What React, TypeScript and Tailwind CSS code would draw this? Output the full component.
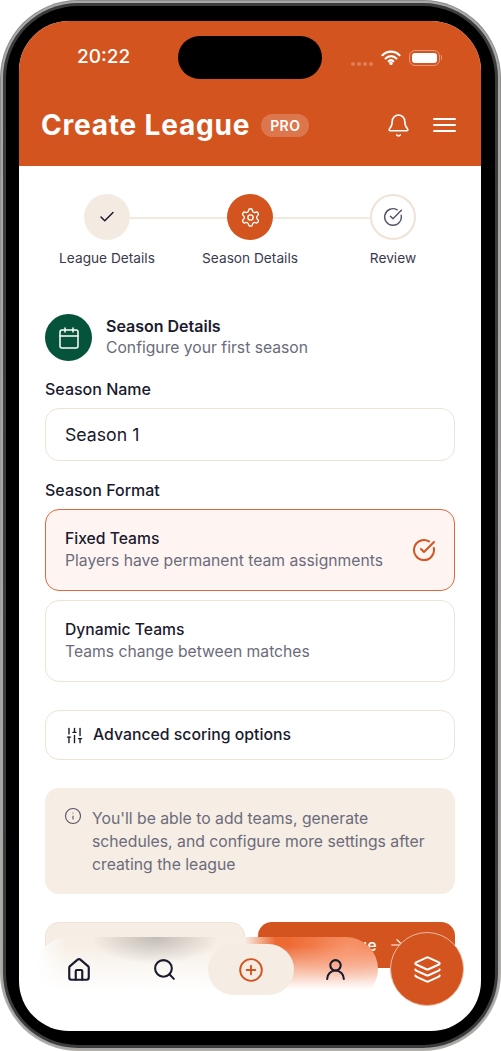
import {
  ArrowLeft,
  ArrowRight,
  Bell,
  Calendar,
  Check,
  CircleCheckBig,
  CirclePlus,
  House,
  Info,
  Layers,
  Search,
  Settings,
  SlidersVertical,
  UserRound,
} from "lucide-react";

function StatusBar() {
  return (
    <div className="grid grid-cols-[1fr_144px_1fr] pt-[15px] h-[58px]">
      <div className="pl-[58px] pt-[9px] text-[19px] leading-[24px] font-medium text-white">20:22</div>
      <div className="h-[43px] rounded-full bg-black" />
      <div className="flex items-start pl-[29px] pt-[14px]">
        <div className="flex gap-[2px] mt-[12px]">
          <span className="w-[4px] h-[4px] rounded-full bg-white/25" />
          <span className="w-[4px] h-[4px] rounded-full bg-white/25" />
          <span className="w-[4px] h-[4px] rounded-full bg-white/25" />
          <span className="w-[4px] h-[4px] rounded-full bg-white/25" />
        </div>
        <svg viewBox="0 0 20 15" className="w-[20px] h-[15px] ml-[8px] text-white" fill="none" stroke="currentColor" strokeWidth="2.2" strokeLinecap="round">
          <path d="M1.5 5.2a12 12 0 0 1 17 0" />
          <path d="M4.6 8.4a7.6 7.6 0 0 1 10.8 0" />
          <path d="M7.7 11.2a3.4 3.4 0 0 1 4.6 0" />
          <circle cx="10" cy="13.3" r="0.7" fill="currentColor" />
        </svg>
        <div className="ml-[8px] w-[31px] h-[16px] rounded-[6px] border border-white/40 p-[2px]">
          <div className="w-full h-full rounded-[3px] bg-white" />
        </div>
        <span className="ml-px mt-[5px] w-px h-[5px] rounded-r-full bg-white/40" />
      </div>
    </div>
  );
}

function Header() {
  return (
    <div className="h-[145px] bg-[#d45420] flex flex-col">
      <StatusBar />
      <div className="flex items-center pl-[22px] pr-[25px] mt-[29px]">
        <h1 className="text-[28px] leading-[34px] font-bold tracking-[0.8px] text-white">Create League</h1>
        <span className="ml-[11px] px-[9px] h-[23px] flex items-center rounded-full bg-white/20 text-[14px] font-semibold tracking-[0.4px] text-white">PRO</span>
        <Bell className="ml-auto w-[25px] h-[25px] text-white" strokeWidth={1.5} />
        <div className="ml-[22px] w-[23px] flex flex-col gap-[4px]">
          <span className="h-[2px] bg-white rounded-full" />
          <span className="h-[2px] bg-white rounded-full" />
          <span className="h-[2px] bg-white rounded-full" />
        </div>
      </div>
    </div>
  );
}

function Stepper() {
  return (
    <div className="relative flex justify-center pt-[28px]">
      <div className="absolute top-[51px] left-[111px] w-[240px] h-[2px] bg-[#f2e8dc]" />
      <div className="relative w-[143px] flex flex-col items-center">
        <div className="w-[46px] h-[46px] rounded-full bg-[#f3ebe1] flex items-center justify-center">
          <Check className="w-[18px] h-[18px] text-[#1a1a2e]" strokeWidth={2} />
        </div>
        <span className="mt-[9px] text-[13.7px] leading-[18px] text-[#3a3a4e]">League Details</span>
      </div>
      <div className="relative w-[143px] flex flex-col items-center">
        <div className="w-[46px] h-[46px] rounded-full bg-[#d45420] flex items-center justify-center">
          <Settings className="w-[21px] h-[21px] text-white" strokeWidth={1.5} />
        </div>
        <span className="mt-[9px] text-[13.7px] leading-[18px] text-[#3a3a4e]">Season Details</span>
      </div>
      <div className="relative w-[143px] flex flex-col items-center">
        <div className="w-[46px] h-[46px] rounded-full bg-white border-2 border-[#efe3d6] flex items-center justify-center">
          <CircleCheckBig className="w-[20px] h-[20px] text-[#55556a]" strokeWidth={1.75} />
        </div>
        <span className="mt-[9px] text-[13.7px] leading-[18px] text-[#3a3a4e]">Review</span>
      </div>
    </div>
  );
}

function OptionCard({ title, text, selected }: { title: string; text: string; selected?: boolean }) {
  return (
    <div
      className={
        selected
          ? "h-[82px] rounded-[14px] border border-[#e0683c] bg-[#fef5f3] pl-[19px] pr-[18px] flex items-center justify-between"
          : "h-[82px] rounded-[14px] border border-[#efe3d6] bg-white pl-[19px] pr-[18px] flex items-center justify-between"
      }
    >
      <div className="-mt-[1px]">
        <div className="text-[15.7px] leading-[22px] font-medium text-[#1a1a2e]">{title}</div>
        <div className="text-[15.7px] leading-[22px] text-[#6b6b7b]">{text}</div>
      </div>
      {selected && <CircleCheckBig className="w-[24px] h-[24px] text-[#d45420]" strokeWidth={2} />}
    </div>
  );
}

function BottomNav() {
  return (
    <>
      {/* frosted pill: the blurred buttons behind it are painted as gradients */}
      <div className="absolute left-[17px] top-[916px] w-[342px] h-[64px] rounded-[33px] bg-[radial-gradient(ellipse_64px_27px_at_119px_0px,rgba(120,118,114,0.42),rgba(120,118,114,0)),radial-gradient(ellipse_60px_36px_at_312px_10px,rgba(255,175,140,0.55),rgba(255,175,140,0)),linear-gradient(to_bottom,rgba(255,255,255,0)_0%,rgba(255,255,255,0)_14%,rgba(255,255,255,1)_82%),linear-gradient(to_right,#ffffff_0%,#f6efe6_9%,#f7efe6_61%,#ee6a34_70%,#ee6a34_82%,#f07a4c_100%)]">
        <House className="absolute left-[30px] top-[20px] w-[26px] h-[26px] text-[#1a1a2e]" strokeWidth={2} />
        <Search className="absolute left-[116px] top-[20px] w-[25px] h-[25px] text-[#1a1a2e]" strokeWidth={2} />
        <UserRound className="absolute left-[287px] top-[20px] w-[25px] h-[25px] text-[#1a1a2e]" strokeWidth={2} />
      </div>
      <div className="absolute left-[189px] top-[923px] w-[86px] h-[51px] rounded-full bg-[#f5ede4] flex items-center justify-center">
        <CirclePlus className="w-[26px] h-[26px] text-[#d45420]" strokeWidth={1.75} />
      </div>
      <div className="absolute left-[371px] top-[911px] w-[74px] h-[74px] rounded-full bg-[#d45420] border border-[#e9b9a2] flex items-center justify-center">
        <Layers className="w-[29px] h-[29px] text-white" strokeWidth={1.75} />
      </div>
    </>
  );
}

export default function App() {
  return (
    <div className="w-[501px] h-[1051px] bg-white font-['Inter',sans-serif]">
      <div className="w-full h-full rounded-[78px] p-px bg-gradient-to-b from-[#8a8a8a] to-[#b5b3a8]">
        <div className="w-full h-full rounded-[77px] p-[2px] bg-[#a8a8a8]">
          <div className="w-full h-full rounded-[75px] p-[3px] bg-[#3c3c3c]">
            <div className="w-full h-full rounded-[72px] pt-[15px] pb-[14px] pl-[13px] pr-[14px] bg-black">
              <div className="relative w-full h-full rounded-[50px] overflow-hidden bg-white">
                <Header />
                <Stepper />
                <div className="px-[26px]">
                  <div className="flex items-center mt-[47px]">
                    <div className="w-[47px] h-[47px] rounded-full bg-[#05533a] flex items-center justify-center">
                      <Calendar className="w-[24px] h-[24px] text-white" strokeWidth={1.5} />
                    </div>
                    <div className="ml-[14px] -mt-[2px]">
                      <div className="text-[16px] leading-[21px] font-semibold text-[#1a1a2e]">Season Details</div>
                      <div className="text-[15.7px] leading-[21px] text-[#6b6b7b]">Configure your first season</div>
                    </div>
                  </div>
                  <div className="mt-[16px] text-[16px] leading-[24px] font-medium text-[#1a1a2e]">Season Name</div>
                  <div className="mt-[7px] h-[53px] rounded-[14px] border border-[#efe3d6] pl-[19px] pt-[2px] flex items-center text-[17.7px] text-[#1a1a2e]">Season 1</div>
                  <div className="mt-[17px] text-[16px] leading-[24px] font-medium text-[#1a1a2e]">Season Format</div>
                  <div className="mt-[7px] flex flex-col gap-[9px]">
                    <OptionCard title="Fixed Teams" text="Players have permanent team assignments" selected />
                    <OptionCard title="Dynamic Teams" text="Teams change between matches" />
                  </div>
                  <div className="mt-[28px] h-[50px] rounded-[14px] border border-[#efe3d6] pl-[19px] flex items-center gap-[9px] text-[15.8px] font-medium text-[#1a1a2e]">
                    <SlidersVertical className="w-[19px] h-[19px]" strokeWidth={1.75} />
                    Advanced scoring options
                  </div>
                  <div className="mt-[28px] h-[106px] rounded-[14px] bg-[#f6ede4] pl-[19px] pr-[28px] pt-[19px] flex gap-[10px]">
                    <Info className="w-[18px] h-[18px] shrink-0 text-[#55556a]" strokeWidth={1.5} />
                    <p className="text-[15.75px] leading-[23px] text-[#6b6b7b]">
                      You'll be able to add teams, generate schedules, and configure more settings after creating the league
                    </p>
                  </div>
                  <div className="mt-[28px] flex gap-[13px]">
                    <div className="w-[200px] h-[46px] rounded-[14px] border border-[#efe3d6] bg-[#f6ede4] flex items-center justify-center gap-[8px] text-[16px] font-medium text-[#1a1a2e]">
                      <ArrowLeft className="w-[18px] h-[18px]" />
                      Back
                    </div>
                    <div className="w-[197px] h-[46px] rounded-[14px] bg-[#d45420] flex items-center justify-center gap-[11px] text-[16px] font-medium text-white">
                      Continue
                      <ArrowRight className="w-[18px] h-[18px]" strokeWidth={1.5} />
                    </div>
                  </div>
                </div>
                <BottomNav />
              </div>
            </div>
          </div>
        </div>
      </div>
    </div>
  );
}
